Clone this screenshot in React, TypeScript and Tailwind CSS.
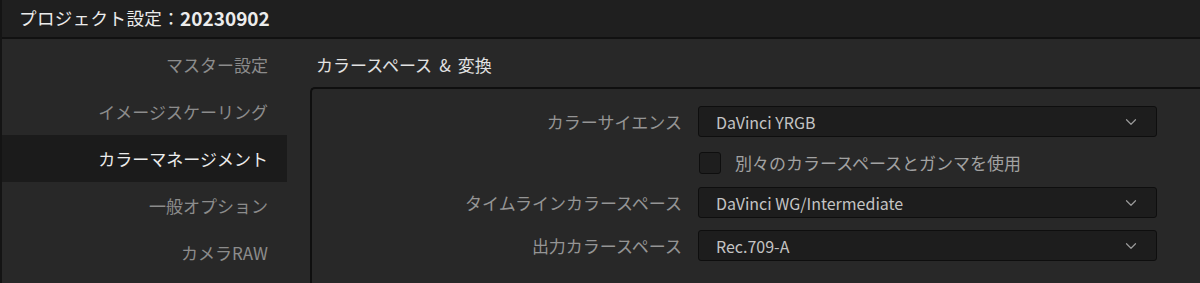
import { ChevronDown } from "lucide-react";

const jp = { fontFamily: '"Noto Sans CJK JP", "Noto Sans", sans-serif' };

const navItems = ["マスター設定", "イメージスケーリング", "カラーマネージメント", "一般オプション", "カメラRAW"];

function Select({ value }: { value: string }) {
    return (
        <div className="flex items-center justify-between w-[459px] h-[31px] pl-[17px] pr-[16px] bg-[#1d1d1d] border border-[#0e0e0e] rounded-[3px] text-[16px] text-[#c4c4c4]">
            <span>{value}</span>
            <ChevronDown className="w-[18px] h-[18px] text-[#9a9a9a]" strokeWidth={1.6} />
        </div>
    );
}

function Row({ label, children }: { label: string; children: React.ReactNode }) {
    return (
        <div className="flex items-center">
            <div className="w-[386px] pr-[16px] text-right text-[17px] text-[#959595]">{label}</div>
            {children}
        </div>
    );
}

export default function App() {
    return (
        <div className="w-[1200px] h-[283px] overflow-hidden bg-[#282828] border-l-2 border-[#141414] flex flex-col" style={jp}>
            <div className="h-[39px] shrink-0 bg-[#1f1f1f] border-b-2 border-[#111] flex items-center pl-[17px] text-[#ececec]">
                <span className="text-[17.5px] tracking-[0.4px]">プロジェクト設定：</span>
                <span className="text-[19px] font-bold">20230902</span>
            </div>

            <div className="flex flex-1">
                <div className="w-[285px] shrink-0 pt-[2px]">
                    {navItems.map((item) => (
                        <div
                            key={item}
                            className={`h-[47px] flex items-center justify-end pr-[19px] text-[17px] ${item === "カラーマネージメント" ? "bg-[#1b1b1b] text-[#ececec]" : "text-[#8c8c8c]"}`}
                        >
                            {item}
                        </div>
                    ))}
                </div>

                <div className="flex-1 flex flex-col pl-[23px]">
                    <div className="h-[48px] flex items-center pl-[6px] pt-[3px] text-[17px] text-[#e2e2e2]">
                        <span>カラースペース</span>
                        <span className="px-[7px]">&amp;</span>
                        <span>変換</span>
                    </div>
                    <div className="flex-1 border-l-2 border-t-2 border-[#0f0f0f] rounded-tl-[5px] bg-[#282828] pt-[17px] flex flex-col">
                        <Row label="カラーサイエンス">
                            <Select value="DaVinci YRGB" />
                        </Row>
                        <div className="flex items-center pl-[387px] mt-[15px] h-[22px]">
                            <div className="w-[22px] h-[22px] bg-[#1e1e1e] border border-[#0e0e0e] rounded-[3px]" />
                            <span className="ml-[14px] text-[17px] text-[#a2a2a2]">別々のカラースペースとガンマを使用</span>
                        </div>
                        <div className="mt-[13px]">
                            <Row label="タイムラインカラースペース">
                                <Select value="DaVinci WG/Intermediate" />
                            </Row>
                        </div>
                        <div className="mt-[12px]">
                            <Row label="出力カラースペース">
                                <Select value="Rec.709-A" />
                            </Row>
                        </div>
                    </div>
                </div>
            </div>
        </div>
    );
}
